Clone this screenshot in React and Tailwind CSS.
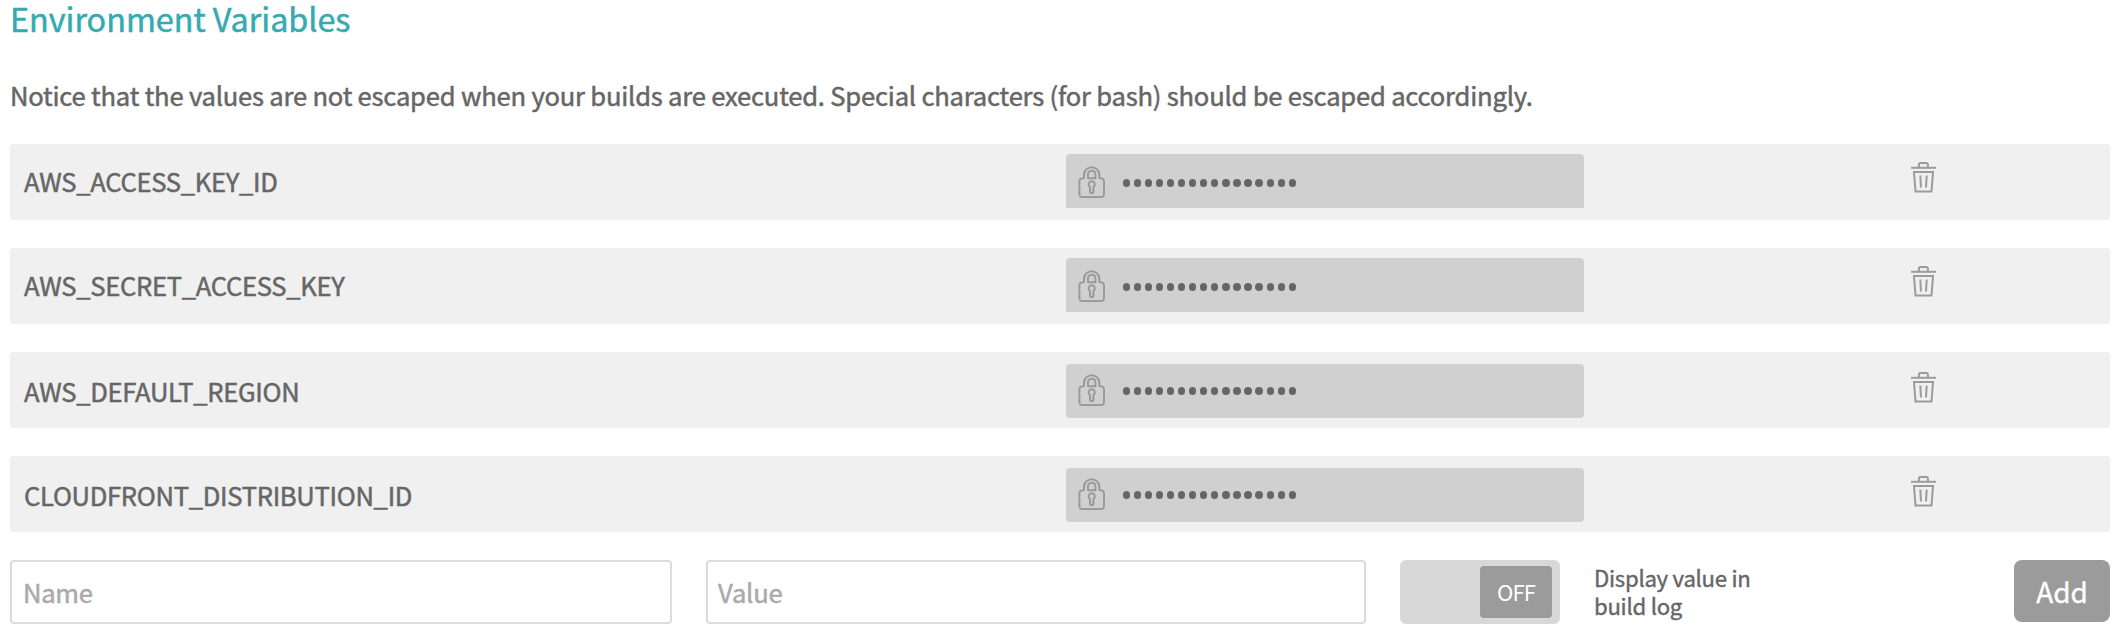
const variables = [
  { name: "AWS_ACCESS_KEY_ID", low: false },
  { name: "AWS_SECRET_ACCESS_KEY", low: false },
  { name: "AWS_DEFAULT_REGION", low: true },
  { name: "CLOUDFRONT_DISTRIBUTION_ID", low: true },
];

function LockIcon() {
  return (
    <svg width="28" height="34" viewBox="0 0 28 34" fill="none" stroke="#9b9b9b" strokeWidth="2" strokeLinejoin="round" className="shrink-0">
      <path d="M6 12V9a7.700 7.700 0 0 1 15.400 0v3l2 .5a2.500 2.500 0 0 1 2.600 2.500V28.200a2.800 2.800 0 0 1-2.800 2.800h-19a2.800 2.800 0 0 1-2.800-2.800V15a2.500 2.500 0 0 1 2.600-2.500z" />
      <path d="M10 12.300V8.400a3.700 3.700 0 0 1 7.400 0V12.300z" />
      <path d="M12 21a3.100 3.100 0 1 1 3.400 0V25.500a1.700 1.700 0 0 1-3.400 0z" />
    </svg>
  );
}

function TrashIcon() {
  return (
    <svg width="26" height="32" viewBox="0 0 26 32" fill="none" stroke="#9b9b9b" strokeWidth="2">
      <path d="M1 6.800h25" />
      <path d="M8.900 6.500V3.500a1.500 1.500 0 0 1 1.500-1.500h6a1.500 1.500 0 0 1 1.500 1.500V6.500" />
      <path d="M4 11h19l-1.500 19.500h-16z" />
      <path d="M10.300 14.500l.7 12M16.700 14.500l-.7 12" />
    </svg>
  );
}

function VariableRow({ name, low }) {
  return (
    <li className="flex h-[76px] items-start rounded-[4px] bg-[#f0f0f0] pl-[14px]">
      <span className={`w-[1042px] text-[25.6px] leading-[38px] tracking-[-0.3px] [-webkit-text-stroke:0.5px_#666] ${low ? "pt-[20px]" : "pt-[18px]"}`}>{name}</span>
      <div className={`flex h-[54px] w-[518px] items-center bg-[#d0d0d0] pl-3 ${low ? "mt-3 rounded-[4px]" : "mt-[10px] rounded-t-[4px] pt-1"}`}>
        <LockIcon />
        <span className="ml-[16.5px] flex gap-[3.79px]">
          {Array.from({ length: 16 }, (_, i) => (
            <span key={i} className="size-[7.3px] rounded-full bg-[#666]" />
          ))}
        </span>
      </div>
      <button className={`ml-[326px] ${low ? "mt-[19px]" : "mt-[17px]"}`} aria-label="Delete">
        <TrashIcon />
      </button>
    </li>
  );
}

export default function App() {
  return (
    <main className="h-[636px] bg-white pr-2 pl-[10px] font-['Noto_Sans_CJK_SC',sans-serif] text-[#666]">
      <h2 className="h-[76px] text-[32.3px] leading-[36px] text-[#35aab0] [-webkit-text-stroke:0.5px_#35aab0]">Environment Variables</h2>
      <p className="h-[68px] text-[25.6px] leading-[38px] tracking-[-0.21px] [-webkit-text-stroke:0.5px_#666]">
        Notice that the values are not escaped when your builds are executed. Special characters (for bash) should be escaped accordingly.
      </p>
      <ul className="flex flex-col gap-7">
        {variables.map((v) => (
          <VariableRow key={v.name} name={v.name} low={v.low} />
        ))}
      </ul>
      <form className="mt-7 flex items-start">
        <input placeholder="Name" className="h-16 w-[662px] rounded-[4px] border-2 border-[#dcdcdc] px-[11px] pb-[2px] text-[25.6px] tracking-[-0.3px] placeholder:text-[#aaa] placeholder:[-webkit-text-stroke:0.5px_#aaa]" />
        <input placeholder="Value" className="ml-[34px] h-16 w-[660px] rounded-[4px] border-2 border-[#dcdcdc] px-[10px] pb-[2px] text-[25.6px] tracking-[-0.2px] placeholder:text-[#aaa] placeholder:[-webkit-text-stroke:0.5px_#aaa]" />
        <div className="ml-[34px] flex h-16 w-40 justify-end rounded-[6px] bg-[#d8d8d8] pt-[6px] pr-2">
          <span className="flex h-[52px] w-[72px] items-center justify-center rounded-[4px] bg-[#9b9b9b] pb-[2px] text-[22px] tracking-[-0.9px] text-white">OFF</span>
        </div>
        <label className="ml-[34px] w-[180px] pt-[3px] text-[22.2px] leading-[28px] tracking-[-0.28px] [-webkit-text-stroke:0.4px_#666]">
          Display value in
          <br />
          build log
        </label>
        <button type="button" className="ml-auto h-[62px] w-24 rounded-[8px] bg-[#9b9b9b] text-[28px] text-white [-webkit-text-stroke:0.3px_#fff]">Add</button>
      </form>
    </main>
  );
}
